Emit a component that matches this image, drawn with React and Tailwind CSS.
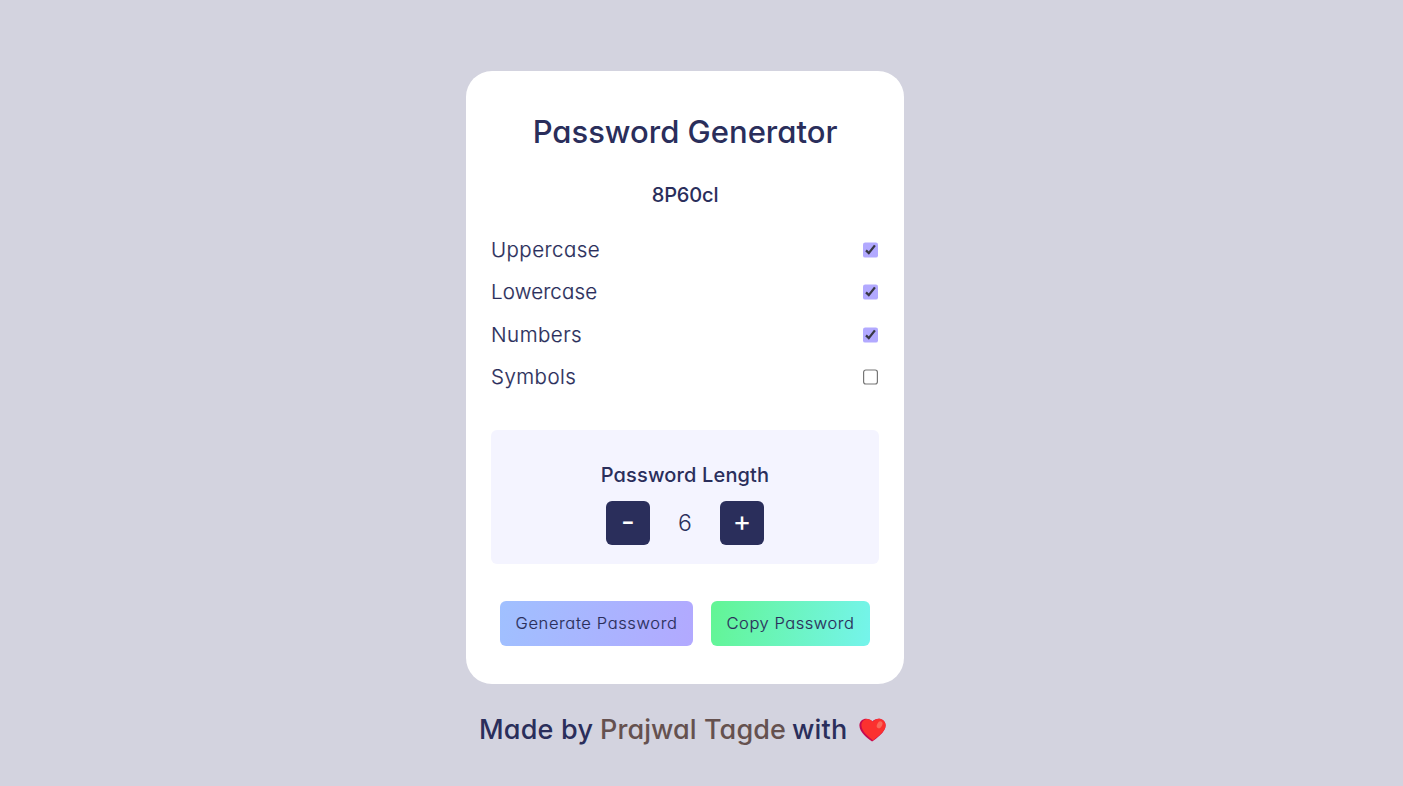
import { useState } from "react";

function Check({ checked, onToggle, label }) {
  return (
    <button
      type="button"
      role="checkbox"
      aria-checked={checked}
      aria-label={label}
      onClick={onToggle}
      className="mb-[1px] mr-[1px] block h-[16px] w-[15px]"
    >
      <svg viewBox="0 0 15 16" className="block h-[16px] w-[15px]">
        {checked ? (
          <>
            <rect y="0.4" width="15" height="15.2" rx="2.2" fill="#b2a9ff" />
            <path d="M3 8.4 L5.8 11.1 L11.9 3.4" fill="none" stroke="#383844" strokeWidth="2.3" />
          </>
        ) : (
          <rect x="0.6" y="1" width="13.8" height="14" rx="2.2" fill="#fff" stroke="#767676" strokeWidth="1.2" />
        )}
      </svg>
    </button>
  );
}

const rows = [
  { name: "Uppercase", style: "h-[42px]", text: "tracking-[0.47px]" },
  { name: "Lowercase", style: "h-[42px]", text: "tracking-[0.15px]" },
  { name: "Numbers", style: "mt-[1px] h-[42px]", text: "tracking-[0.5px]" },
  { name: "Symbols", style: "h-[42px]", text: "tracking-[0.45px]" },
];

export default function App() {
  const [options, setOptions] = useState([true, true, true, false]);
  const [length, setLength] = useState(6);
  const toggle = (i) => setOptions(options.map((v, j) => (j === i ? !v : v)));

  return (
    <div className="h-[786px] w-full overflow-hidden bg-[#d3d3df] pl-[466px] pt-[71px] font-[Inter,sans-serif] text-[#2a2e5b] [font-feature-settings:'cv11']">
      <main className="flex h-[613px] w-[438px] flex-col rounded-[26px] bg-white px-[25px] pt-[37px]">
        <h1 className="h-12 whitespace-nowrap text-center text-[31px] font-medium leading-[48px]">
          <span>Password Generator</span>
        </h1>
        <h2 className="mt-[24px] h-[30px] text-center text-[20px] font-medium leading-[30px] tracking-[-0.15px]">
          <span>8P60cl</span>
        </h2>
        <div className="mt-[19px] h-[169px]">
          {rows.map((row, i) => (
            <div key={row.name} className={`flex items-center justify-between text-[20.5px] font-light [-webkit-text-stroke:0.2px] ${row.style}`}>
              <span className={row.text}>{row.name}</span>
              <Check checked={options[i]} onToggle={() => toggle(i)} label={row.name} />
            </div>
          ))}
        </div>
        <section className="mt-[32px] h-[134px] rounded-[6px] bg-[#f4f4ff] pt-[30px]">
          <h3 className="h-[30px] text-center text-[20px] font-medium leading-[30px] tracking-[0.15px]">
            <span>Password Length</span>
          </h3>
          <div className="mt-[11px] flex h-[44px] items-center justify-center">
            <button onClick={() => setLength(length - 1)} className="flex h-[44px] w-[44px] items-center justify-center rounded-[6px] bg-[#2a2e5b] pb-[4px] text-[30px] leading-none text-white">
              -
            </button>
            <span className="w-[70px] text-center text-[23px] font-light">{length}</span>
            <button onClick={() => setLength(length + 1)} className="flex h-[44px] w-[44px] items-center justify-center rounded-[6px] bg-[#2a2e5b] pb-[4px] text-[28px] leading-none text-white">
              +
            </button>
          </div>
        </section>
        <div className="mt-[37px] flex h-[45px] justify-center gap-[18px] whitespace-nowrap text-[16.5px] font-light [-webkit-text-stroke:0.15px]">
          <button className="flex w-[193px] items-center justify-center rounded-[6px] bg-[linear-gradient(100deg,#a0c0ff,#b2a9ff)]">
            <span className="tracking-[0.62px]">Generate Password</span>
          </button>
          <button className="flex w-[159px] items-center justify-center rounded-[6px] bg-[linear-gradient(100deg,#62f594,#75f4ec)]">
            <span className="tracking-[0.53px]">Copy Password</span>
          </button>
        </div>
      </main>
      <footer className="mt-[25px] flex h-[42px] w-[438px] items-center whitespace-nowrap pl-[13px] text-[27px] font-medium leading-[42px]">
        <span className="w-[121px] tracking-[0.2px]">Made by</span>
        <span className="w-[192px] tracking-[0.08px] text-[#65514f]">Prajwal Tagde</span>
        <span className="w-[67px] tracking-[0.2px]">with</span>
        <svg viewBox="0 0 27 24" className="h-[24px] w-[27px]">
          <path d="M13.1 23.5 C8.8 20.3 0.4 14.2 0.4 7.4 C0.4 0.8 8.7 -1.8 13.3 3.6 C18 -1.6 26.6 0.8 26.6 7.4 C26.6 14 17.4 20.3 13.1 23.5Z" fill="#c70a50" />
          <path d="M14 22.4 C10.5 19.5 2.6 14 2.4 7.6 C2.2 1.6 9.3 -1.6 13.8 3.8 C18 -1.6 26.6 0.8 26.6 7.4 C26.6 13.5 18.2 18.8 14 22.4Z" fill="#fb312f" />
          <ellipse cx="20.6" cy="6.8" rx="2.5" ry="3.7" transform="rotate(28 20.6 6.8)" fill="#f9695a" />
        </svg>
      </footer>
    </div>
  );
}
